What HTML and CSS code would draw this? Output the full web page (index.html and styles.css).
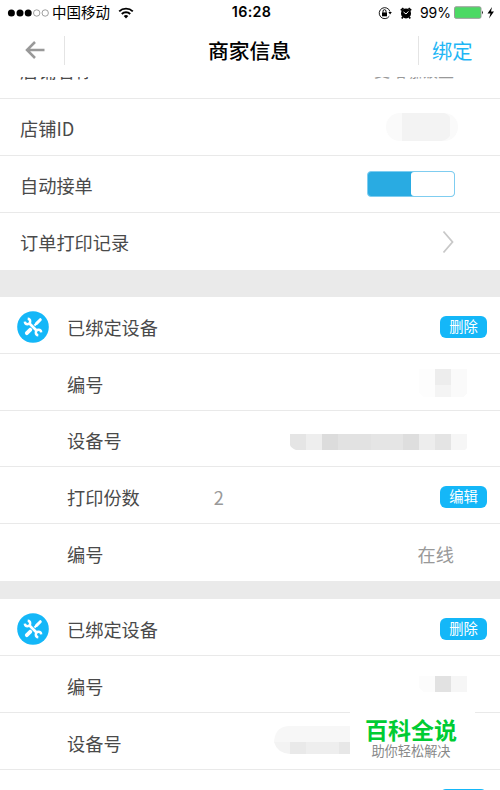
FILE: index.html
```html
<!DOCTYPE html>
<html lang="zh-CN">

<head>
    <meta charset="utf-8" />
    <meta name="viewport" content="width=device-width, initial-scale=1.0">
    <title>商家信息</title>
    <link rel="stylesheet" href="styles.css">
</head>

<body>
    <header class="top">
        <div class="status">
            <div class="status-side">
                <svg class="signal" width="42" height="10" viewBox="0 0 42 10">
                    <circle cx="3.4" cy="5" r="3.5" />
                    <circle cx="12" cy="5" r="3.5" />
                    <circle cx="20.2" cy="5" r="3.5" />
                    <circle cx="28.7" cy="5" r="3.2" class="signal-off" />
                    <circle cx="37.2" cy="5" r="3.2" class="signal-off" />
                </svg>
                <span class="carrier">中国移动</span>
                <svg class="wifi" width="16" height="12" viewBox="0 0 16 12">
                    <path d="M1.2 4.4a9.8 9.8 0 0 1 13.6 0M3.8 7a6 6 0 0 1 8.4 0" fill="none" stroke="#000" stroke-width="1.9" />
                    <path d="M5.7 9a3.3 3.3 0 0 1 4.6 0L8 11.4z" />
                </svg>
            </div>
            <div class="time">16:28</div>
            <div class="status-side status-right">
                <svg width="14" height="14" viewBox="0 0 14 14">
                    <path d="M11.3 10.2A5.5 5.5 0 1 1 12 5.6" fill="none" stroke="#000" stroke-width=".9" />
                    <path d="M10.4 6h3.4l-1.7 2.4z" />
                    <path d="M4 6.4h5v3.9H4z" />
                    <path d="M5 6.5V5.2a1.5 1.5 0 0 1 3 0v1.3" fill="none" stroke="#000" stroke-width="1" />
                </svg>
                <svg class="alarm" width="12" height="12" viewBox="0 0 12 12">
                    <circle cx="6" cy="6.4" r="5" />
                    <path d="M.8 3.4 3.4 1M11.2 3.4 8.6 1M2.8 10 1.8 11.4M9.2 10l1 1.4" stroke="#000" stroke-width="1.7" />
                    <path d="M3.5 5 6 7l2.4-2.6" fill="none" stroke="#fff" stroke-width="1" />
                </svg>
                <span class="percent">99%</span>
                <svg width="41" height="14" viewBox="0 0 41 14">
                    <rect x=".5" y=".8" width="26.5" height="11.5" rx="1.5" fill="#4cd964" stroke="#999" />
                    <path d="M28 4.6q1.8 1.9 0 3.8z" />
                    <path d="M38 1 33.5 7.5h3L35 12.5l5-7h-3z" />
                </svg>
            </div>
        </div>
        <div class="nav">
            <a href="#" class="back">
                <svg width="20" height="18" viewBox="0 0 20 18">
                    <path d="M19.5 9H2M10 1 2 9l8 8" />
                </svg>
            </a>
            <h1 class="title">商家信息</h1>
            <a href="#" class="bind">绑定</a>
        </div>
    </header>

    <section class="group group-shop">
        <div class="row row-name"><span>店铺名称</span><span class="value">麦咕咖饭盒</span></div>
        <div class="row">
            <span>店铺ID</span>
            <svg class="mask mask-id" width="72" height="28">
                <rect width="72" height="28" rx="14" fill="#fafafa" />
                <path d="M16 0h42q6 2 6 5v18q-3 4-8 5H16z" fill="#f3f3f3" />
            </svg>
        </div>
        <div class="row"><span>自动接单</span><span class="switch"></span></div>
        <div class="row">
            <span>订单打印记录</span>
            <svg class="chevron" width="12" height="24" viewBox="0 0 12 24">
                <path d="M1.5 1.5 10.5 12l-9 10.5" />
            </svg>
        </div>
    </section>

    <section class="group group-device">
        <div class="row">
            <svg class="tools" width="32" height="32" viewBox="0 0 32 32">
                <circle cx="16" cy="16" r="15.8" class="tools-bg" />
                <path d="M9.8 22.2 13.4 18.6" stroke-width="3.8" stroke-linecap="round" />
                <path d="M13.5 18.5 21.5 10.5" stroke-width="2.2" />
                <path d="M19.5 12.5 23.3 8.7" stroke-width="3" stroke-linecap="round" />
                <path d="M14 14 18 18" class="tools-gap" />
                <path d="M12 12 20 20" stroke-width="2.6" />
                <path d="M10.7 7.8A2.7 2.7 0 1 1 7.8 10.7M21.3 24.2A2.7 2.7 0 1 1 24.2 21.3" stroke-width="2.4" />
            </svg>
            <span>已绑定设备</span>
            <button class="btn">删除</button>
        </div>
        <div class="row">
            <span>编号</span>
            <svg class="mask" width="48" height="28" shape-rendering="crispEdges">
                <path d="M0 0h16v28H4L0 24z" fill="#fdfdfd" />
                <path d="M16 0h16v16H16z" fill="#ededed" />
                <path d="M16 16h16v12H16z" fill="#f4f4f4" />
                <path d="M32 0h16v25l-4 3H32z" fill="#fafafa" />
            </svg>
        </div>
        <div class="row">
            <span>设备号</span>
            <svg class="mask mask-number" width="177" height="16">
                <path d="M0 0h16v16H6Q1 14 0 11z" fill="#e5e5e5" />
                <path d="M16 0h16v16H16z" fill="#eee" />
                <path d="M32 0h16v16H32z" fill="#dcdcdc" />
                <path d="M48 0h33v16H48z" fill="#e2e2e2" />
                <path d="M81 0h32v16H81z" fill="#e5e5e5" />
                <path d="M113 0h16v16h-16z" fill="#dedede" />
                <path d="M129 0h16v16h-16z" fill="#ededed" />
                <path d="M145 0h16v16h-16z" fill="#e4e4e4" />
                <path d="M161 0h16v14l-2 2h-14z" fill="#f6f6f6" />
            </svg>
        </div>
        <div class="row">
            <span>打印份数</span>
            <span class="count">2</span>
            <button class="btn">编辑</button>
        </div>
        <div class="row"><span>编号</span><span class="value">在线</span></div>
    </section>

    <section class="group group-device">
        <div class="row">
            <svg class="tools" width="32" height="32" viewBox="0 0 32 32">
                <circle cx="16" cy="16" r="15.8" class="tools-bg" />
                <path d="M9.8 22.2 13.4 18.6" stroke-width="3.8" stroke-linecap="round" />
                <path d="M13.5 18.5 21.5 10.5" stroke-width="2.2" />
                <path d="M19.5 12.5 23.3 8.7" stroke-width="3" stroke-linecap="round" />
                <path d="M14 14 18 18" class="tools-gap" />
                <path d="M12 12 20 20" stroke-width="2.6" />
                <path d="M10.7 7.8A2.7 2.7 0 1 1 7.8 10.7M21.3 24.2A2.7 2.7 0 1 1 24.2 21.3" stroke-width="2.4" />
            </svg>
            <span>已绑定设备</span>
            <button class="btn">删除</button>
        </div>
        <div class="row">
            <span>编号</span>
            <svg class="mask" width="48" height="18" shape-rendering="crispEdges">
                <path d="M0 0h16v16H5L0 12z" fill="#fcfcfc" />
                <path d="M16 0h16v16H16z" fill="#e2e2e2" />
                <path d="M32 0h16v16H32z" fill="#f6f6f6" />
            </svg>
        </div>
        <div class="row">
            <span>设备号</span>
            <svg class="mask mask-wide" width="193" height="28">
                <path d="M0 16Q1 0 16 0h177v16z" fill="#f7f7f7" />
                <path d="M0 16h16v12Q3 27 0 16z" fill="#f3f3f3" />
                <path d="M16 16h16v12H16z" fill="#e9e9e9" />
                <path d="M32 16h33v12H32z" fill="#eee" />
                <path d="M65 16h128v12H65z" fill="#e7e7e7" />
            </svg>
        </div>
        <div class="row row-cut"><button class="btn"></button></div>
    </section>

    <div class="watermark">
        <div class="watermark-name">百科全说</div>
        <div class="watermark-text">助你轻松解决</div>
    </div>
</body>

</html>
```

FILE: styles.css
```css
* {
    box-sizing: border-box;
}

body {
    margin: 0;
    height: 790px;
    overflow: hidden;
    background: #eaeaea;
    color: #4a4a4a;
    font-family: "Noto Sans CJK SC", sans-serif;
    font-size: 18.2px;
    line-height: 1;
}

a {
    text-decoration: none;
}

.top {
    position: relative;
    z-index: 1;
    height: 77px;
    background: #fff;
    color: #000;
}

.status {
    display: flex;
    align-items: center;
    height: 25px;
    padding: 0 5px 0 8px;
    font-size: 14.5px;
}

.status-side {
    display: flex;
    align-items: center;
    flex: 1;
}

.status-right {
    justify-content: flex-end;
}

.signal {
    overflow: visible;
}

.signal-off {
    fill: none;
    stroke: #777;
    stroke-width: .7;
}

.carrier {
    margin-left: 2px;
}

.wifi {
    margin-left: 8px;
}

.time {
    font-family: Inter, sans-serif;
    font-size: 14.3px;
    font-weight: 600;
    letter-spacing: .3px;
}

.alarm {
    margin-left: 8px;
}

.percent {
    margin: 0 3px 0 8px;
    font-family: Inter, sans-serif;
    font-size: 14px;
}

.nav {
    display: flex;
    align-items: center;
    height: 50px;
}

.back,
.bind {
    display: flex;
    align-items: center;
    height: 29px;
}

.back {
    width: 65px;
    padding-left: 25px;
    border-right: 1px solid #e4e4e4;
}

.back path {
    fill: none;
    stroke: #999;
    stroke-width: 2.5;
}

.title {
    flex: 1;
    margin: 0;
    padding-left: 16px;
    text-align: center;
    font-size: 20.8px;
    font-weight: 500;
}

.bind {
    width: 82px;
    padding: 0 0 0 13px;
    border-left: 1px solid #e4e4e4;
    color: #1fb6f5;
    font-size: 20.3px;
}

.group {
    background: #fff;
}

.group-shop {
    margin: -34.5px 0 27.5px;
}

.group-device {
    margin-bottom: 18.5px;
}

.row {
    display: flex;
    align-items: center;
    height: 56.75px;
    padding: 4px 46px 0 67px;
    border-bottom: 1px solid #e9e9e9;
}

.row:last-child {
    border-bottom: 0;
}

.group-shop .row {
    padding: 2px 46px 0 20px;
}

.group-shop .row-name {
    padding-top: 0;
}

.row-name .value {
    font-size: 16px;
}

.value {
    margin-left: auto;
    color: #999;
}

.count {
    margin-left: 74px;
    color: #999;
}

.btn {
    width: 47px;
    height: 22px;
    margin: 0 -33px 0 auto;
    padding: 0 0 1px;
    border: 0;
    border-radius: 6px;
    background: #14b7f8;
    color: #fff;
    font: 14.3px/1 "Noto Sans CJK SC", sans-serif;
}

/* only the top edge of this row is on screen */
.row-cut {
    height: 22px;
    padding-top: 19px;
    align-items: flex-start;
    overflow: hidden;
}

.tools {
    margin: 0 18px 0 -50px;
    fill: none;
    stroke: #fff;
}

.tools-bg {
    fill: #14b7f8;
    stroke: none;
}

.tools-gap {
    stroke: #14b7f8;
    stroke-width: 4;
}

.switch {
    width: 88px;
    height: 26px;
    margin: -2px -1px 0 auto;
    border: 1px solid #7fcdf0;
    border-radius: 4px;
    background: #29abe2;
}

.switch::before {
    content: "";
    display: block;
    width: 43px;
    height: 24px;
    margin-left: auto;
    border-radius: 3px;
    background: #fff;
}

.chevron {
    margin-left: auto;
}

.chevron path {
    fill: none;
    stroke: #c8c8c8;
    stroke-width: 1.8;
}

.mask {
    margin: -1px -13px 0 auto;
}

.mask-id {
    margin: -3px -4px 0 auto;
}

.mask-number {
    margin-top: 4px;
}

.mask-wide {
    margin-top: -5px;
}

.watermark {
    position: fixed;
    left: 350px;
    top: 705px;
    width: 125px;
    height: 61px;
    padding: 9px 3px 0 0;
    background: #fff;
    text-align: center;
}

.watermark-name {
    color: #0c3;
    font-size: 23px;
    font-weight: 700;
    line-height: 30px;
}

.watermark-text {
    color: #888;
    font-size: 13.2px;
    line-height: 14px;
}
```
